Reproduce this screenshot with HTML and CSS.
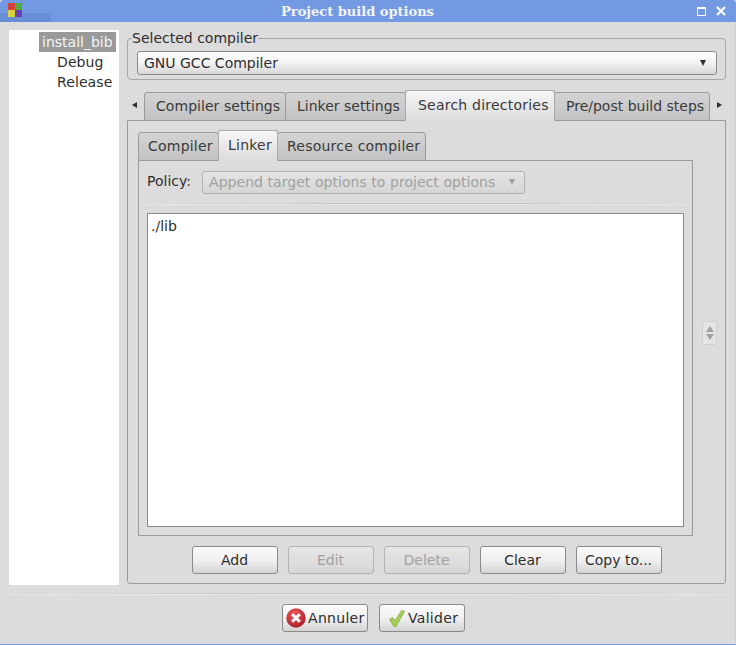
FILE: index.html
```html
<!DOCTYPE html>
<html lang="en">
<head>
<meta charset="utf-8">
<title>Project build options</title>
<link rel="stylesheet" href="styles.css">
</head>
<body>
<div class="window">
  <header class="titlebar">
    <div class="title-shade"></div>
    <svg class="app-icon" width="14" height="14" viewBox="0 0 14 14">
      <rect x="0" y="0" width="7" height="7" fill="#d8403a"/>
      <rect x="7" y="0" width="7" height="7" fill="#4fae3c"/>
      <rect x="0" y="7" width="7" height="7" fill="#d9d23c"/>
      <rect x="7" y="7" width="7" height="7" fill="#6a3fb0"/>
    </svg>
    <div class="title">Project build options</div>
    <div class="win-controls">
      <svg width="9" height="9" viewBox="0 0 9 9"><rect x="0.5" y="0.5" width="8" height="8" fill="none" stroke="#fff"/><rect x="0" y="0" width="9" height="2" fill="#fff"/></svg>
      <svg width="10" height="10" viewBox="0 0 10 10"><path d="M1 1L9 9M9 1L1 9" stroke="#fff" stroke-width="2.2" fill="none"/></svg>
    </div>
  </header>

  <div class="content">
    <nav class="tree">
      <div class="tree-item selected">install_bib</div>
      <div class="tree-item child">Debug</div>
      <div class="tree-item child">Release</div>
    </nav>

    <main class="main">
      <fieldset class="group">
        <legend>Selected compiler</legend>
        <div class="combo">
          <span>GNU GCC Compiler</span>
          <span class="caret"></span>
        </div>
      </fieldset>

      <div class="tabs outer-tabs">
        <span class="scroll-arrow left"></span>
        <div class="tab t-compiler-settings">Compiler settings</div>
        <div class="tab t-linker-settings">Linker settings</div>
        <div class="tab active t-search">Search directories</div>
        <div class="tab t-prepost">Pre/post build steps</div>
        <span class="scroll-arrow right"></span>
      </div>

      <section class="panel">
        <div class="panel-top">
          <div class="inner">
            <div class="tabs inner-tabs">
              <div class="tab t-compiler">Compiler</div>
              <div class="tab active t-linker">Linker</div>
              <div class="tab t-resource">Resource compiler</div>
            </div>
            <div class="inner-panel">
              <div class="policy">
                <label>Policy:</label>
                <div class="combo disabled">
                  <span>Append target options to project options</span>
                  <span class="caret"></span>
                </div>
              </div>
              <div class="hr"></div>
              <div class="list">./lib</div>
            </div>
          </div>
          <div class="spin">
            <span class="spin-up"></span>
            <span class="spin-down"></span>
          </div>
        </div>
        <div class="actions">
          <button class="btn">Add</button>
          <button class="btn" disabled>Edit</button>
          <button class="btn" disabled>Delete</button>
          <button class="btn">Clear</button>
          <button class="btn">Copy to...</button>
        </div>
      </section>
    </main>
  </div>

  <footer class="footer">
    <div class="hr footer-hr"></div>
    <div class="footer-buttons">
      <button class="btn icon-btn annuler">
        <svg width="20" height="20" viewBox="0 0 20 20">
          <defs><radialGradient id="red" cx="40%" cy="30%" r="75%"><stop offset="0" stop-color="#ee5a5a"/><stop offset="1" stop-color="#a81c2c"/></radialGradient></defs>
          <circle cx="10" cy="10" r="9.7" fill="url(#red)"/>
          <path d="M6.2 6.2L13.8 13.8M13.8 6.2L6.2 13.8" stroke="#fff" stroke-width="3" fill="none"/>
        </svg>
        <span>Annuler</span>
      </button>
      <button class="btn icon-btn valider">
        <svg width="16" height="17" viewBox="0 0 16 17">
          <path d="M0.5 9.5L3.5 7.5L6 11L12.5 0.5L15.5 1.5L7 16.5H5Z" fill="#a5cf52" stroke="#86a84a" stroke-width="0.8"/>
        </svg>
        <span>Valider</span>
      </button>
    </div>
  </footer>
</div>
</body>
</html>
```
FILE: styles.css
```css
* { box-sizing: border-box; }
html, body { margin: 0; padding: 0; }
body {
  width: 736px;
  height: 645px;
  overflow: hidden;
  font-family: "DejaVu Sans", sans-serif;
  font-size: 14px;
  color: #2e2e2e;
  background: #dcdcdc;
}
.window {
  width: 736px;
  height: 645px;
  display: flex;
  flex-direction: column;
  background: #dcdcdc;
  border-bottom: 1px solid #7aa0e2;
  border-right: 1px solid #c4d0e4;
}
.titlebar {
  position: relative;
  height: 22px;
  flex: none;
  display: flex;
  align-items: center;
  background: #7299e1;
  border-radius: 4px 4px 0 0;
  padding: 0 8px;
  margin-right: -1px;
}
.title-shade {
  position: absolute;
  left: 0;
  bottom: 0;
  width: 51px;
  height: 9px;
  background: #688fd6;
  border-radius: 0 2px 0 0;
}
.app-icon { position: relative; flex: none; margin-top: -2px; }
.title {
  flex: 1;
  text-align: center;
  padding-right: 4px;
  font-family: "DejaVu Serif", serif;
  font-weight: bold;
  font-size: 13px;
  color: #f1f4fb;
}
.win-controls {
  display: flex;
  align-items: center;
  gap: 10px;
  padding-right: 2px;
}
.win-controls svg { display: block; }

.content {
  flex: none;
  height: 563px;
  display: flex;
  gap: 8px;
  padding: 8px 9px 0 9px;
}
.tree {
  width: 110px;
  height: 555px;
  flex: none;
  background: #fff;
  padding-top: 2px;
}
.tree-item {
  height: 20px;
  line-height: 20px;
  width: max-content;
  margin-left: 30px;
  padding: 0 3px;
}
.tree-item.selected { background: #9a9a9a; color: #f4f4f4; }
.tree-item.child { margin-left: 45px; letter-spacing: 0.1px; }

.main {
  width: 599px;
  flex: none;
  display: flex;
  flex-direction: column;
}
.group {
  margin: 0;
  padding: 0;
  min-width: 0;
  height: 50px;
  border: 1px solid #a8a8a8;
  border-radius: 4px;
}
.group legend {
  margin-left: 4px;
  padding: 0;
  height: 16px;
  line-height: 16px;
}
.combo {
  display: flex;
  align-items: center;
  justify-content: space-between;
  height: 24px;
  margin: 5px 8px 0 9px;
  padding: 0 10px 0 6px;
  border: 1px solid #8a8a8a;
  border-radius: 3px;
  background: linear-gradient(#fefefe, #f4f4f4 45%, #d8d8d8);
}
.caret {
  width: 0;
  height: 0;
  border-left: 3px solid transparent;
  border-right: 3px solid transparent;
  border-top: 6px solid #2e2e2e;
}

.tabs { display: flex; align-items: flex-end; position: relative; z-index: 1; }
.outer-tabs { height: 31px; margin-top: 10px; }
.inner-tabs { height: 31px; }
.tab {
  flex: none;
  height: 29px;
  line-height: 27px;
  white-space: nowrap;
  color: #3a3a3a;
  border: 1px solid #9a9a9a;
  border-radius: 3px 3px 0 0;
  background: linear-gradient(#d4d4d4, #c2c2c2);
}
.tab.active {
  height: 31px;
  line-height: 28px;
  background: linear-gradient(#f6f6f6, #dcdcdc);
  border-color: #a8a8a8;
  border-bottom-color: #dcdcdc;
  position: relative;
  z-index: 1;
}
.tab + .tab { margin-left: -1px; }
.outer-tabs .tab.active { letter-spacing: 0.22px; }
.inner-tabs .tab { letter-spacing: 0.22px; padding-left: 9px; }
.t-compiler-settings { width: 142px; padding-left: 11px; letter-spacing: 0.05px; }
.t-linker-settings { width: 121px; padding-left: 11px; }
.t-search { width: 150px; padding-left: 12px; }
.t-prepost { width: 156px; padding-left: 11px; }
.t-compiler { width: 81px; }
.t-linker { width: 60px; }
.t-resource { width: 149px; }

.scroll-arrow {
  flex: none;
  width: 17px;
  height: 29px;
  display: flex;
  align-items: center;
}
.scroll-arrow::before {
  content: "";
  border-top: 3px solid transparent;
  border-bottom: 3px solid transparent;
  margin-bottom: 4px;
}
.scroll-arrow.left { padding-left: 5px; }
.scroll-arrow.right { padding-left: 7px; }
.scroll-arrow.left::before { border-right: 5px solid #2e2e2e; }
.scroll-arrow.right::before { border-left: 5px solid #2e2e2e; }

.panel {
  margin-top: -1px;
  height: 464px;
  border: 1px solid #9a9a9a;
  border-radius: 0 0 3px 3px;
  padding: 9px 0 0 10px;
  display: flex;
  flex-direction: column;
  gap: 10px;
}
.panel-top {
  display: flex;
  align-items: center;
  gap: 9px;
  height: 406px;
}
.inner {
  width: 555px;
  height: 406px;
  flex: none;
  display: flex;
  flex-direction: column;
}
.inner-panel {
  flex: 1;
  margin-top: -1px;
  border: 1px solid #9a9a9a;
  padding: 10px 8px 8px 8px;
  display: flex;
  flex-direction: column;
}
.policy {
  display: flex;
  align-items: center;
  height: 23px;
  gap: 11px;
}
.policy label { width: 44px; padding-bottom: 3px; }
.combo.disabled {
  width: 323px;
  height: 23px;
  margin: 0;
  padding: 0 9px 1px 6px;
  letter-spacing: 0.05px;
  color: #a0a0a0;
  border-color: #b0b0b0;
  background: linear-gradient(#e4e4e4, #d6d6d6);
}
.combo.disabled .caret { border-top-color: #a0a0a0; }
.hr {
  height: 2px;
  background: linear-gradient(90deg, transparent, #c6c6c6 35%, #c6c6c6 70%, transparent);
  border-bottom: 1px solid #e6e6e6;
}
.inner-panel .hr { margin-top: 9px; }
.list {
  flex: 1;
  margin-top: 8px;
  background: #fff;
  border: 1px solid #8a8a8a;
  padding: 4px 3px;
  line-height: 17px;
}
.spin {
  width: 15px;
  height: 24px;
  flex: none;
  display: flex;
  flex-direction: column;
  align-items: center;
  justify-content: center;
  gap: 2px;
  background: #e4e4e4;
  border: 1px solid #cfcfcf;
  border-radius: 2px;
}
.spin-up, .spin-down {
  border-left: 4px solid transparent;
  border-right: 4px solid transparent;
}
.spin-up { border-bottom: 6px solid #a0a0a0; }
.spin-down { border-top: 6px solid #a0a0a0; }

.actions {
  display: flex;
  justify-content: center;
  gap: 10px;
  padding-right: 10px;
}
.btn {
  width: 86px;
  height: 28px;
  padding: 0;
  font: inherit;
  color: #2e2e2e;
  border: 1px solid #8a8a8a;
  border-radius: 3px;
  background: linear-gradient(#fbfbfb, #f0f0f0 50%, #d4d4d4);
}
.btn:disabled {
  color: #a0a0a0;
  border-color: #b4b4b4;
  background: linear-gradient(#e6e6e6, #d6d6d6);
}

.footer {
  flex: 1;
  display: flex;
  flex-direction: column;
}
.footer-hr { margin: 8px 8px 0; }
.footer-buttons {
  display: flex;
  justify-content: center;
  gap: 11px;
  margin-top: 9px;
  padding-left: 12px;
}
.icon-btn {
  display: flex;
  align-items: center;
  letter-spacing: 0.3px;
}
.icon-btn svg { flex: none; }
.annuler { gap: 2px; padding-left: 3px; }
.valider { gap: 3px; padding-left: 9px; }
```
